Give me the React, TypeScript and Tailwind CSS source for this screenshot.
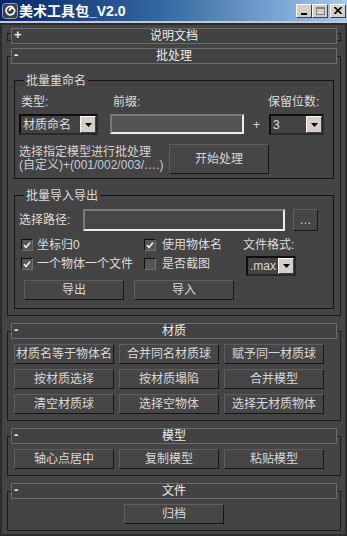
import React from 'react';

const Btn = ({ children, className = 'w-[100px] h-[20px]' }: { children: React.ReactNode; className?: string }) => (
  <button
    className={`${className} shrink-0 flex items-center justify-center bg-[#464646] border border-t-[#5e5e5e] border-l-[#5e5e5e] border-b-[#161616] border-r-[#161616] text-[12px] leading-[14px] text-[#d8d8d8]`}
  >
    {children}
  </button>
);

const Arrow = () => (
  <div className="w-[16px] h-full shrink-0 flex items-center justify-center bg-[#d4d0c8] border border-t-white border-l-white border-b-[#404040] border-r-[#404040]">
    <svg width="7" height="4" viewBox="0 0 7 4">
      <polygon points="0,0 7,0 3.5,4" fill="#000" />
    </svg>
  </div>
);

const Select = ({ value, className }: { value: string; className: string }) => (
  <div className={`${className} shrink-0 flex items-stretch border-2 border-t-[#0e0e0e] border-l-[#0e0e0e] border-b-[#2a2a2a] border-r-[#2a2a2a] bg-[#434343]`}>
    <div className="flex-1 flex items-center pl-[2px] text-[12px] text-[#dcdcdc] leading-[14px]">{value}</div>
    <Arrow />
  </div>
);

const Check = ({ on }: { on?: boolean }) => (
  <div className="w-[12px] h-[12px] shrink-0 flex items-center justify-center bg-[#555555] border border-t-[#101010] border-l-[#101010] border-b-[#707070] border-r-[#707070]">
    {on && (
      <svg width="8" height="8" viewBox="0 0 8 8">
        <polyline points="1,4 3,6.5 7,1.5" fill="none" stroke="#f0f0f0" strokeWidth="1.6" />
      </svg>
    )}
  </div>
);

const Header = ({ title, sign, className = '-mt-[9px]' }: { title: string; sign: string; className?: string }) => (
  <div className={`${className} mx-[3px] h-[16px] shrink-0 relative flex items-center justify-center border border-[#6c6c6c] bg-[#424242]`}>
    <span className="absolute left-[2px] top-[-1px] text-[13px] font-bold leading-[14px] text-[#eeeeee]">{sign}</span>
    <span className="text-[12px] leading-[14px] text-[#ececec]">{title}</span>
  </div>
);

const Group = ({ title, children, className }: { title: string; children: React.ReactNode; className: string }) => (
  <div className={`${className} mx-[6px] border border-[#141414] flex flex-col`}>
    <div className="-mt-[6px] ml-[9px] self-start px-[2px] bg-[#444444] text-[12px] leading-[13px] text-[#dcdcdc]">{title}</div>
    {children}
  </div>
);

const Logo = () => (
  <svg width="16" height="16" viewBox="0 0 16 16">
    <rect x="0.5" y="0.5" width="15" height="15" rx="3" fill="#3a4048" stroke="#9aa0a8" />
    <path d="M11.5 5 A4.2 4.2 0 1 0 12 9.5 A2.6 2.6 0 1 0 7.5 8" fill="none" stroke="#f2f2f2" strokeWidth="1.8" />
  </svg>
);

const CapBtn = ({ children, className = '' }: { children: React.ReactNode; className?: string }) => (
  <div className={`${className} w-[16px] h-[14px] flex items-center justify-center bg-[#d4d0c8] border border-t-white border-l-white border-b-[#404040] border-r-[#404040]`}>
    {children}
  </div>
);

export default function App() {
  return (
    <div className="w-[347px] h-[536px] overflow-hidden flex flex-col bg-[#444444] font-['Liberation_Sans','Noto_Sans_CJK_SC',sans-serif] select-none">
      {/* title bar */}
      <div className="h-[21px] shrink-0 flex items-center pl-[2px] pr-[1px] bg-gradient-to-r from-[#0a246a] via-[#3a6ea5] to-[#a6caf0]">
        <Logo />
        <span className="ml-[1px] text-[14px] font-bold leading-[16px] text-white">美术工具包_V2.0</span>
        <div className="ml-auto flex items-center">
          <CapBtn>
            <div className="w-[6px] h-[2px] bg-black mt-[6px]" />
          </CapBtn>
          <CapBtn>
            <div className="w-[9px] h-[8px] border border-t-2 border-[#808080]" />
          </CapBtn>
          <CapBtn className="ml-[2px]">
            <svg width="8" height="7" viewBox="0 0 8 7">
              <path d="M0.5 0 L7.5 7 M7.5 0 L0.5 7" stroke="#000" strokeWidth="1.6" />
            </svg>
          </CapBtn>
        </div>
      </div>
      <div className="h-[2px] shrink-0 bg-[#c8c8c8]" />
      <div className="flex-1 flex flex-col border-2 border-[#2c2c2c] text-[#dcdcdc]">
        {/* 说明文档 (collapsed) */}
        <div className="mt-[8px] ml-[5px] w-[334px] border border-[#1c1c1c] flex flex-col">
          <Header title="说明文档" sign="+" className="-mt-[6px] -mb-[4px]" />
        </div>

        {/* 批处理 */}
        <div className="mt-[15px] ml-[5px] w-[334px] border border-[#1c1c1c] flex flex-col">
          <Header title="批处理" sign="-" />
          <Group title="批量重命名" className="mt-[16px]">
            <div className="mt-[7px] pl-[4px] flex items-end">
              <div className="flex flex-col">
                <span className="ml-[2px] text-[12px] leading-[14px]">类型:</span>
                <Select value="材质命名" className="mt-[5px] w-[79px] h-[21px]" />
              </div>
              <div className="ml-[12px] flex flex-col">
                <span className="ml-[3px] text-[12px] leading-[14px]">前缀:</span>
                <div className="mt-[5px] mb-[1px] w-[134px] h-[20px] bg-[#525252] border-2 border-t-[#7a7a7a] border-l-[#7a7a7a] border-b-[#ececec] border-r-[#ececec]" />
              </div>
              <span className="w-[25px] h-[21px] flex items-center justify-center text-[13px] text-[#cfcfcf]">+</span>
              <div className="flex flex-col">
                <span className="-ml-[1px] text-[12px] leading-[14px]">保留位数:</span>
                <Select value="3" className="mt-[5px] w-[55px] h-[21px]" />
              </div>
            </div>
            <div className="mt-[9px] mb-[4px] pl-[4px] flex items-center">
              <div className="w-[150px] flex flex-col text-[12px] leading-[13px] text-[#d4d4d4]">
                <span>选择指定模型进行批处理</span>
                <span className="text-[#c8ccd8]">(自定义)+(001/002/003/….)</span>
              </div>
              <Btn className="w-[100px] h-[30px]">开始处理</Btn>
            </div>
          </Group>

          <Group title="批量导入导出" className="mt-[16px]">
            <div className="mt-[6px] pl-[4px] flex items-center">
              <span className="w-[64px] text-[12px] leading-[14px]">选择路径:</span>
              <div className="w-[202px] h-[22px] bg-[#474747] border-2 border-t-[#7a7a7a] border-l-[#7a7a7a] border-b-[#ececec] border-r-[#ececec]" />
              <Btn className="ml-[8px] w-[25px] h-[22px]">…</Btn>
            </div>
            <div className="mt-[7px] pl-[6px] flex items-center text-[12px] leading-[14px]">
              <div className="w-[123px] flex items-center">
                <Check on />
                <span className="ml-[4px]">坐标归0</span>
              </div>
              <div className="w-[99px] flex items-center">
                <Check on />
                <span className="ml-[6px]">使用物体名</span>
              </div>
              <span>文件格式:</span>
            </div>
            <div className="mt-[5px] pl-[6px] flex items-start text-[12px] leading-[14px]">
              <div className="w-[123px] flex items-center">
                <Check on />
                <span className="ml-[4px]">一个物体一个文件</span>
              </div>
              <div className="w-[99px] flex items-center">
                <Check />
                <span className="ml-[6px]">是否截图</span>
              </div>
              <Select value=".max" className="-mt-[1px] ml-[3px] w-[50px] h-[20px]" />
            </div>
            <div className="mt-[4px] mb-[8px] pl-[9px] flex gap-[10px]">
              <Btn>导出</Btn>
              <Btn>导入</Btn>
            </div>
          </Group>
          <div className="h-[6px]" />
        </div>

        {/* 材质 */}
        <div className="mt-[15px] ml-[5px] w-[334px] border border-[#1c1c1c] flex flex-col">
          <Header title="材质" sign="-" />
          <div className="mt-[5px] mb-[6px] pl-[6px] grid grid-cols-[100px_100px_100px] gap-x-[5px] gap-y-[5px]">
            <Btn>材质名等于物体名</Btn>
            <Btn>合并同名材质球</Btn>
            <Btn>赋予同一材质球</Btn>
            <Btn>按材质选择</Btn>
            <Btn>按材质塌陷</Btn>
            <Btn>合并模型</Btn>
            <Btn>清空材质球</Btn>
            <Btn>选择空物体</Btn>
            <Btn>选择无材质物体</Btn>
          </div>
        </div>

        {/* 模型 */}
        <div className="mt-[15px] ml-[5px] w-[334px] border border-[#1c1c1c] flex flex-col">
          <Header title="模型" sign="-" />
          <div className="mt-[5px] mb-[6px] pl-[6px] flex gap-[5px]">
            <Btn>轴心点居中</Btn>
            <Btn>复制模型</Btn>
            <Btn>粘贴模型</Btn>
          </div>
        </div>

        {/* 文件 */}
        <div className="mt-[15px] ml-[5px] w-[334px] border border-[#1c1c1c] flex flex-col">
          <Header title="文件" sign="-" />
          <div className="mt-[5px] mb-[6px] flex justify-center">
            <Btn>归档</Btn>
          </div>
        </div>
      </div>
    </div>
  );
}
